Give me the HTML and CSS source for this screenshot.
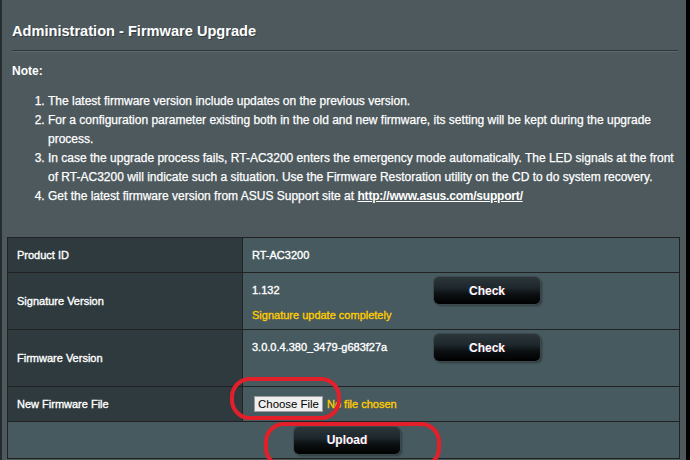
FILE: index.html
```html
<!DOCTYPE html>
<html lang="en">
<head>
<meta charset="utf-8">
<title>Administration - Firmware Upgrade</title>
<link rel="stylesheet" href="styles.css">
</head>
<body>
<div class="panel">
  <div class="title">Administration - Firmware Upgrade</div>
  <div class="rule"></div>
  <div class="note">Note:</div>
  <ol class="notes">
    <li>The latest firmware version include updates on the previous version.</li>
    <li>For a configuration parameter existing both in the old and new firmware, its setting will be kept during the upgrade process.</li>
    <li>In case the upgrade process fails, RT-AC3200 enters the emergency mode automatically. The LED signals at the front of RT-AC3200 will indicate such a situation. Use the Firmware Restoration utility on the CD to do system recovery.</li>
    <li>Get the latest firmware version from ASUS Support site at <a class="link" href="#">http://www.asus.com/support/</a></li>
  </ol>
  <div class="form-table">
    <div class="th row-sm">Product ID</div>
    <div class="td row-sm center-v">RT-AC3200</div>

    <div class="th row-lg">Signature Version</div>
    <div class="td row-lg top">
      <div class="info">
        <div class="ver">1.132</div>
        <div class="status">Signature update completely</div>
      </div>
      <button class="btn" type="button">Check</button>
    </div>

    <div class="th row-lg">Firmware Version</div>
    <div class="td row-lg top">
      <div class="info">
        <div class="ver">3.0.0.4.380_3479-g683f27a</div>
      </div>
      <button class="btn" type="button">Check</button>
    </div>

    <div class="th row-sm">New Firmware File</div>
    <div class="td row-sm center-v">
      <span class="file-btn">Choose File</span>
      <span class="file-status">No file chosen</span>
    </div>

    <div class="foot">
      <button class="btn" type="button">Upload</button>
    </div>
  </div>
</div>
<div class="mark mark-file"></div>
<div class="mark mark-upload"></div>
</body>
</html>
```

FILE: styles.css
```css
html, body {
  margin: 0;
  padding: 0;
}
body {
  width: 690px;
  height: 460px;
  overflow: hidden;
  background: #000;
  font-family: "Liberation Sans", Arial, sans-serif;
  color: #fff;
  position: relative;
}
.panel {
  margin-left: 2px;
  width: 684px;
  height: 460px;
  box-sizing: border-box;
  background: #4d595d;
  padding: 21px 6px 0 5px;
  box-shadow: -2px 0 0 #262d30;
  -webkit-text-stroke-width: 0.25px;
}
.title {
  margin-left: 5px;
  font-size: 14.6px;
  font-weight: bold;
  line-height: 20px;
  text-shadow: 1px 1px 0 rgba(0,0,0,0.35);
  -webkit-text-stroke-width: 0;
}
.rule {
  margin: 9px 2px 0 5px;
  height: 1px;
  background: #2c373b;
  border-bottom: 1px solid #5d6b70;
}
.note {
  margin: 10px 0 0 5px;
  font-size: 12px;
  font-weight: bold;
  line-height: 19px;
  -webkit-text-stroke-width: 0;
}
.notes {
  margin: 11px 0 0 5px;
  padding: 0 0 0 36px;
  font-size: 12px;
  line-height: 19px;
}
.link {
  color: #fff;
  font-weight: bold;
  text-decoration: underline;
  letter-spacing: -0.2px;
  -webkit-text-stroke-width: 0;
}
.form-table {
  margin-top: 31px;
  display: grid;
  grid-template-columns: 235px 1fr;
  border: 1px solid #222;
  border-bottom: 0;
  font-size: 11px;
}
.th {
  background: #2f3a3e;
  border-right: 1px solid #222;
  border-bottom: 1px solid #222;
  box-sizing: border-box;
  padding-left: 9px;
  display: flex;
  align-items: center;
  -webkit-text-stroke-width: 0.35px;
}
.td {
  background: #475a5f;
  border-bottom: 1px solid #222;
  box-sizing: border-box;
  padding-left: 9px;
  display: flex;
  -webkit-text-stroke-width: 0.35px;
}
.row-sm { height: 35px; }
.row-lg { height: 57px; }
.center-v { align-items: center; }
.top {
  align-items: flex-start;
  padding-top: 4px;
}
.info {
  width: 182px;
}
.ver {
  line-height: 27px;
}
.status {
  margin-top: 3px;
  line-height: 16px;
  color: #ffcc00;
}
.btn {
  width: 106px;
  height: 27px;
  border: 0;
  border-radius: 5px;
  background: linear-gradient(to bottom, #2c373b 0%, #1e272b 40%, #0c1113 62%, #000 100%);
  box-shadow: 0 0 0 1px #3d484c, 2px 2px 2px rgba(0,0,0,0.35);
  color: #fff;
  font-family: "Liberation Sans", Arial, sans-serif;
  font-size: 12px;
  font-weight: bold;
  padding: 0;
  -webkit-text-stroke-width: 0;
  text-shadow: 1px 0 0 rgba(255,0,0,0.25), -1px 0 0 rgba(0,128,255,0.25);
}
.file-btn {
  display: inline-block;
  box-sizing: border-box;
  height: 16px;
  width: 69px;
  margin-left: 2px;
  background: #efefef;
  border: 1px solid #9c9c9c;
  color: #000;
  font-size: 11.4px;
  line-height: 14px;
  text-align: center;
  -webkit-text-stroke-width: 0;
}
.file-status {
  margin-left: 4px;
  color: #ffcc00;
  font-size: 11px;
}
.foot {
  grid-column: 1 / -1;
  height: 37px;
  box-sizing: border-box;
  background: #475a5f;
  border-bottom: 1px solid #222;
  display: flex;
  align-items: center;
  justify-content: center;
  padding-left: 7px;
}
.mark {
  position: absolute;
  box-sizing: border-box;
  border: 4px solid #e3202a;
  border-radius: 20px;
}
.mark-file {
  left: 230px;
  top: 377px;
  width: 111px;
  height: 43px;
}
.mark-upload {
  left: 264px;
  top: 422px;
  width: 177px;
  height: 46px;
}
```
